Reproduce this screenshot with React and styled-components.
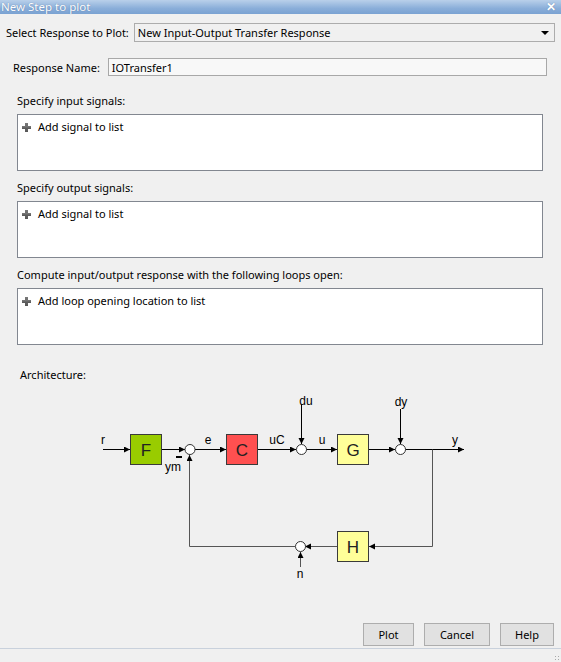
import React from "react";
import styled, { createGlobalStyle } from "styled-components";

const GlobalStyle = createGlobalStyle`
  html, body {
    margin: 0;
    padding: 0;
    background: #f0f0f0;
  }

  body {
    font-family: "Noto Sans", "Open Sans", sans-serif;
    font-size: 11px;
    color: #000;
  }
`;

const StyledWindow = styled.div`
  display: flex;
  flex-direction: column;
  width: 561px;
  height: 662px;
  overflow: hidden;
  background: #f0f0f0;
`;

const StyledTitleBar = styled.div`
  display: flex;
  align-items: center;
  justify-content: space-between;
  height: 14px;
  padding: 0 5px 0 1px;
  background: linear-gradient(#b9d0ea, #8aaed9 60%, #7aa2d2);
  color: #fff;
  font-size: 11.5px;
  line-height: 14px;
  text-shadow: 0 0 1px rgba(40, 70, 120, 0.6);

  .button_close {
    font-family: "Liberation Sans", sans-serif;
    font-size: 12px;
    font-weight: 700;
  }
`;

const StyledRow = styled.div`
  display: flex;
  align-items: center;
  gap: ${(props) => props.$gap}px;
  margin-top: ${(props) => props.$top}px;
  padding: 0 ${(props) => props.$right}px 0 ${(props) => props.$left}px;
  height: ${(props) => props.$height}px;
`;

const StyledSelect = styled.div`
  display: flex;
  flex: 1;
  align-items: center;
  justify-content: space-between;
  height: 100%;
  padding: 0 5px 0 3px;
  border: 1px solid #acacac;
  box-sizing: border-box;
  background: #f0f0f0;

  .icon_arrow {
    width: 0;
    height: 0;
    border-left: 4px solid transparent;
    border-right: 4px solid transparent;
    border-top: 4px solid #000;
  }
`;

const StyledField = styled.div`
  display: flex;
  flex: 1;
  align-items: center;
  height: 100%;
  padding: 0 3px;
  border: 1px solid #a8a8a8;
  box-sizing: border-box;
  background: #f8f8f8;
`;

const StyledSection = styled.div`
  display: flex;
  flex-direction: column;
  margin-top: ${(props) => props.$top}px;
  padding: 0 18px 0 17px;

  .text_label {
    height: 16px;
    line-height: 16px;
  }
`;

const StyledListBox = styled.div`
  height: 57px;
  margin-top: 5px;
  padding: 4px 4px;
  border: 1px solid #828790;
  box-sizing: border-box;
  background: #fff;
`;

const StyledAddItem = styled.div`
  display: flex;
  align-items: center;
  gap: 7px;
  line-height: 16px;
`;

const StyledPlus = styled.span`
  position: relative;
  width: 9px;
  height: 9px;

  &::before,
  &::after {
    content: "";
    position: absolute;
    background: linear-gradient(#7a7a7a, #555);
  }

  &::before {
    left: 3px;
    top: 0;
    width: 3px;
    height: 9px;
  }

  &::after {
    left: 0;
    top: 3px;
    width: 9px;
    height: 3px;
  }
`;

const StyledArchitecture = styled.div`
  margin-top: 22px;
  padding-left: 20px;
  line-height: 16px;
`;

const StyledDiagram = styled.svg`
  display: block;
  margin: 7px 0 0 80px;
  font-family: "Liberation Sans", Arial, sans-serif;

  .label {
    font-size: 12px;
    fill: #000;
  }

  .block_letter {
    font-size: 17px;
    fill: #222;
  }
`;

const StyledFooter = styled.div`
  display: flex;
  justify-content: flex-end;
  gap: 10px;
  margin-top: auto;
  padding: 0 7px 2px 0;
`;

const StyledButton = styled.button`
  width: ${(props) => props.$width}px;
  height: 23px;
  padding: 0;
  border: 1px solid #adadad;
  background: #e1e1e1;
  font-family: inherit;
  font-size: 11px;
  color: #000;
`;

const StyledStatusBar = styled.div`
  display: flex;
  justify-content: flex-end;
  align-items: flex-end;
  height: 12px;
  padding: 0 1px 1px 0;
  border-top: 1px solid #c9d1dc;

  .grip {
    width: 6px;
    height: 6px;
    background-image: radial-gradient(circle, #a8a8a8 0.8px, transparent 1px);
    background-size: 3px 3px;
  }
`;

const AddItem = ({ text }) => (
  <StyledAddItem>
    <StyledPlus />
    <span>{text}</span>
  </StyledAddItem>
);

const ListSection = ({ label, text, top }) => (
  <StyledSection $top={top}>
    <span className="text_label">{label}</span>
    <StyledListBox>
      <AddItem text={text} />
    </StyledListBox>
  </StyledSection>
);

const Block = ({ x, y, fill, letter }) => (
  <g>
    <rect x={x + 0.5} y={y + 0.5} width="31" height="30" fill={fill} stroke="#3a3a3a" />
    <text className="block_letter" x={x + 16} y={y + 22} textAnchor="middle">
      {letter}
    </text>
  </g>
);

const Sum = ({ cx, cy }) => (
  <circle cx={cx} cy={cy} r="5" fill="#fff" stroke="#333" />
);

const Diagram = () => (
  <StyledDiagram width="400" height="200" viewBox="80 390 400 200">
    <defs>
      <marker id="arrow" markerWidth="7" markerHeight="7" refX="6" refY="3" orient="auto" markerUnits="userSpaceOnUse">
        <path d="M0,0 L6,3 L0,6 Z" fill="#000" />
      </marker>
    </defs>

    <g stroke="#000" strokeWidth="1" fill="none">
      <path d="M103,449.5 H130" markerEnd="url(#arrow)" />
      <path d="M162,449.5 H185" markerEnd="url(#arrow)" />
      <path d="M195,449.5 H226" markerEnd="url(#arrow)" />
      <path d="M258,449.5 H296" markerEnd="url(#arrow)" />
      <path d="M301.5,405 V444" markerEnd="url(#arrow)" />
      <path d="M306,449.5 H337" markerEnd="url(#arrow)" />
      <path d="M369,449.5 H395" markerEnd="url(#arrow)" />
      <path d="M400.5,409 V444" markerEnd="url(#arrow)" />
      <path d="M405,449.5 H464" markerEnd="url(#arrow)" />
    </g>

    <g stroke="#555" strokeWidth="1" fill="none">
      <path d="M432.5,449.5 V546.5 H369" markerEnd="url(#arrow)" />
      <path d="M337,546.5 H305" markerEnd="url(#arrow)" />
      <path d="M300.5,567 V552" markerEnd="url(#arrow)" />
      <path d="M295,546.5 H189.5 V455" markerEnd="url(#arrow)" />
    </g>

    <Block x={130} y={434} fill="#99cc00" letter="F" />
    <Block x={226} y={434} fill="#ff5050" letter="C" />
    <Block x={337} y={434} fill="#ffff99" letter="G" />
    <Block x={337} y={531} fill="#ffff99" letter="H" />

    <Sum cx={190} cy={449.5} />
    <Sum cx={301.5} cy={449.5} />
    <Sum cx={400.5} cy={449.5} />
    <Sum cx={300.5} cy={546.5} />

    <rect x="176" y="456" width="6" height="2" fill="#000" />

    <text className="label" x="103" y="444" textAnchor="middle">r</text>
    <text className="label" x="208" y="444" textAnchor="middle">e</text>
    <text className="label" x="277" y="444" textAnchor="middle">uC</text>
    <text className="label" x="322" y="444" textAnchor="middle">u</text>
    <text className="label" x="455" y="444" textAnchor="middle">y</text>
    <text className="label" x="306" y="405" textAnchor="middle">du</text>
    <text className="label" x="401" y="406" textAnchor="middle">dy</text>
    <text className="label" x="173" y="471" textAnchor="middle">ym</text>
    <text className="label" x="300" y="578" textAnchor="middle">n</text>
  </StyledDiagram>
);

const App = () => {
  return (
    <StyledWindow>
      <GlobalStyle />

      <StyledTitleBar>
        <span>New Step to plot</span>
        <span className="button_close">✕</span>
      </StyledTitleBar>

      <StyledRow $top={9} $height={19} $left={6} $right={6} $gap={5}>
        <span>Select Response to Plot:</span>
        <StyledSelect>
          <span>New Input-Output Transfer Response</span>
          <span className="icon_arrow" />
        </StyledSelect>
      </StyledRow>

      <StyledRow $top={16} $height={18} $left={13} $right={14} $gap={8}>
        <span>Response Name:</span>
        <StyledField>IOTransfer1</StyledField>
      </StyledRow>

      <ListSection top={17} label="Specify input signals:" text="Add signal to list" />
      <ListSection top={9} label="Specify output signals:" text="Add signal to list" />
      <ListSection
        top={9}
        label="Compute input/output response with the following loops open:"
        text="Add loop opening location to list"
      />

      <StyledArchitecture>Architecture:</StyledArchitecture>

      <Diagram />

      <StyledFooter>
        <StyledButton $width={51}>Plot</StyledButton>
        <StyledButton $width={66}>Cancel</StyledButton>
        <StyledButton $width={54}>Help</StyledButton>
      </StyledFooter>

      <StyledStatusBar>
        <span className="grip" />
      </StyledStatusBar>
    </StyledWindow>
  );
};

export default App;
